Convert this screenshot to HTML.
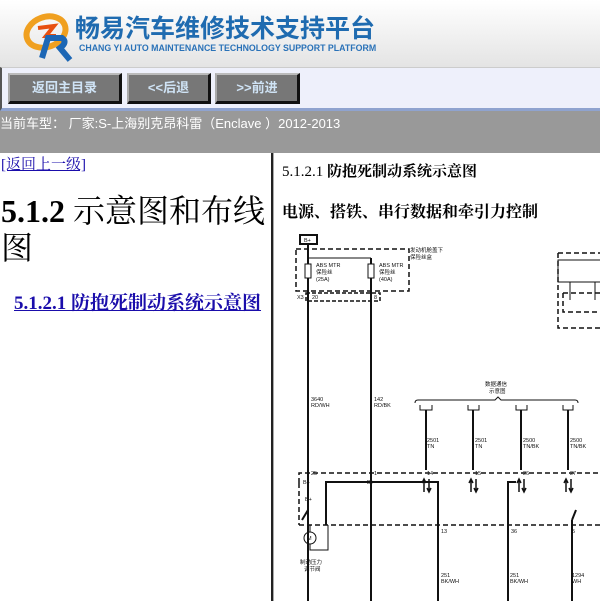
<!DOCTYPE html>
<html><head><meta charset="utf-8"><style>
*{margin:0;padding:0;box-sizing:border-box}
body{width:600px;height:601px;overflow:hidden;background:#fff;font-family:"Liberation Serif","Noto Serif CJK SC",serif;position:relative}
#hdr{position:absolute;left:0;top:0;width:600px;height:67px;background:linear-gradient(#fff,#e4e4e4)}
#nav{position:absolute;left:0;top:67px;width:600px;height:44px;background:#eef0fb;border-top:1px solid #ccc;border-bottom:3px solid #8fa3cf;border-left:2px solid #555}
.b{position:absolute;top:5px;height:31px;background:#777;border-top:2px solid #bbb;border-left:2px solid #aaa;border-right:3px solid #111;border-bottom:3px solid #111;color:#cfe3f5;font:bold 13px "Liberation Sans","Noto Sans CJK SC",sans-serif;text-align:center;line-height:26px}
#grey{position:absolute;left:0;top:111px;width:600px;height:42px;background:#999;color:#fff;font:13px "Liberation Sans","Noto Sans CJK SC",sans-serif;padding-top:2px}
#left{position:absolute;left:0;top:153px;width:271px;height:448px}
#div{position:absolute;left:271px;top:153px;width:3px;height:448px;background:#222;border-right:1px solid #aaa}
a{color:#1a0dab}
</style></head><body>
<div id="hdr">
<svg width="60" height="60" style="position:absolute;left:22px;top:8px" viewBox="0 0 60 60">
<ellipse cx="24" cy="24" rx="20" ry="15" fill="none" stroke="#f0a020" stroke-width="6" transform="rotate(-20 24 24)"/>
<path d="M16 20 L32 18 L24 28 L34 28" fill="none" stroke="#e85010" stroke-width="4"/>
<path d="M20 50 L26 30 L40 30 Q46 34 38 40 L48 52" fill="none" stroke="#1d67b5" stroke-width="6"/>
</svg>
<div style="position:absolute;left:75px;top:12px;font:bold 25px 'Noto Sans CJK SC',sans-serif;color:#1f6bb0;line-height:30px">畅易汽车维修技术支持平台</div>
<div style="position:absolute;left:79px;top:43px;font:bold 8.8px 'Liberation Sans',sans-serif;color:#2a72b8;line-height:10px">CHANG YI AUTO MAINTENANCE TECHNOLOGY SUPPORT PLATFORM</div>
</div>
<div id="nav">
<div class="b" style="left:6px;width:114px">返回主目录</div>
<div class="b" style="left:125px;width:84px">&lt;&lt;后退</div>
<div class="b" style="left:213px;width:85px">&gt;&gt;前进</div>
</div>
<div id="grey">当前车型： 厂家:S-上海别克昂科雷（Enclave ）2012-2013</div>
<div id="left">
<div style="position:absolute;left:1px;top:0;font-size:15px"><a href="#">[返回上一级]</a></div>
<div style="position:absolute;left:1px;top:40px;width:270px;font-size:32px;line-height:37px"><b>5.1.2</b> 示意图和布线图</div>
<div style="position:absolute;left:14px;top:135px;font-size:19px;font-weight:bold"><a href="#">5.1.2.1 防抱死制动系统示意图</a></div>
</div>
<div id="div"></div>
<div style="position:absolute;left:282px;top:160px;font-size:15px">5.1.2.1 <b>防抱死制动系统示意图</b></div>
<div style="position:absolute;left:282px;top:199px;font-size:16px;font-weight:bold">电源、搭铁、串行数据和牵引力控制</div>
<svg style="position:absolute;left:270px;top:220px" width="330" height="381" viewBox="0 0 330 381" font-family="Liberation Sans,Noto Sans CJK SC,sans-serif" font-size="5.5" fill="none" stroke="#111">
<rect x="30" y="15" width="17" height="9" stroke-width="2"/>
<text x="34" y="22" fill="#111" stroke="none">B+</text>
<path d="M38 24V385M101 38V385" stroke-width="2"/>
<path d="M38 38H101"/>
<rect x="26" y="29" width="113" height="42" stroke-dasharray="5,3" stroke-width="1.5"/>
<rect x="36" y="73" width="74" height="8" stroke-dasharray="4,2" stroke-width="1.5"/>
<rect x="35" y="44" width="6" height="14" fill="#fff"/><rect x="98" y="44" width="6" height="14" fill="#fff"/>
<g fill="#111" stroke="none">
<text x="140" y="32">发动机舱盖下</text><text x="140" y="39">保险丝盒</text>
<text x="46" y="47">ABS MTR</text><text x="46" y="54">保险丝</text><text x="46" y="61">(25A)</text>
<text x="109" y="47">ABS MTR</text><text x="109" y="54">保险丝</text><text x="109" y="61">(40A)</text>
<text x="27" y="79">X3</text><text x="42" y="79">20</text><text x="104" y="79">8</text>
<text x="41" y="181">3640</text><text x="41" y="187">RD/WH</text>
<text x="104" y="181">142</text><text x="104" y="187">RD/BK</text>
<text x="215" y="166">数据通信</text><text x="219" y="173">示意图</text>
<text x="157" y="222">2501</text><text x="157" y="228">TN</text>
<text x="205" y="222">2501</text><text x="205" y="228">TN</text>
<text x="253" y="222">2500</text><text x="253" y="228">TN/BK</text>
<text x="300" y="222">2500</text><text x="300" y="228">TN/BK</text>
<text x="41" y="255">25</text><text x="104" y="255">1</text><text x="157" y="255">14</text><text x="205" y="255">15</text><text x="253" y="255">26</text><text x="300" y="255">27</text>
<text x="33" y="264">B+</text><text x="97" y="264">B+</text><text x="35" y="281">B+</text>
<text x="171" y="313">13</text><text x="241" y="313">36</text><text x="302" y="313">5</text>
<text x="30" y="344">制动压力</text><text x="34" y="351">调节阀</text>
<text x="171" y="357">251</text><text x="171" y="363">BK/WH</text>
<text x="240" y="357">251</text><text x="240" y="363">BK/WH</text>
<text x="302" y="357">1294</text><text x="302" y="363">WH</text>
</g>
<path d="M145 183Q145 180 148 180H225L228 177L231 180H305Q308 180 308 183" />
<path d="M150 185V190H162V185M198 185V190H209V185M246 185V190H257V185M293 185V190H303V185"/>
<path d="M156 190V250M203 190V250M251 190V250M298 190V250" stroke-width="2"/>
<path d="M29 263V253H330M29 263V305" stroke-dasharray="5,3" stroke-width="1.5"/>
<path d="M29 305H330" stroke-dasharray="5,3" stroke-width="1.5"/>
<g stroke-width="1.5">
<path d="M154 272V260M152 263L154 259L156 263M159 259V271M157 268L159 272L161 268"/>
<path d="M201 272V260M199 263L201 259L203 263M206 259V271M204 268L206 272L208 268"/>
<path d="M249 272V260M247 263L249 259L251 263M254 259V271M252 268L254 272L256 268"/>
<path d="M296 272V260M294 263L296 259L298 263M301 259V271M299 268L301 272L303 268"/>
</g>
<path d="M32 300L38 290M56 305V262H168V385M238 385V262H246M302 300L306 290M302 300V385" stroke-width="2"/>
<circle cx="40" cy="318" r="6"/>
<text x="37" y="320" fill="#111" stroke="none">M</text>
<path d="M40 305V312M40 324V330H58V305"/>
<rect x="288" y="40" width="50" height="22"/>
<path d="M300 62V80M325 62V80"/>
<path d="M288 33H330M288 33V108H330" stroke-dasharray="5,3" stroke-width="1.5"/>
<path d="M293 73H330M293 73V92H330" stroke-dasharray="5,3" stroke-width="1.5"/>
</svg>
</body></html>
